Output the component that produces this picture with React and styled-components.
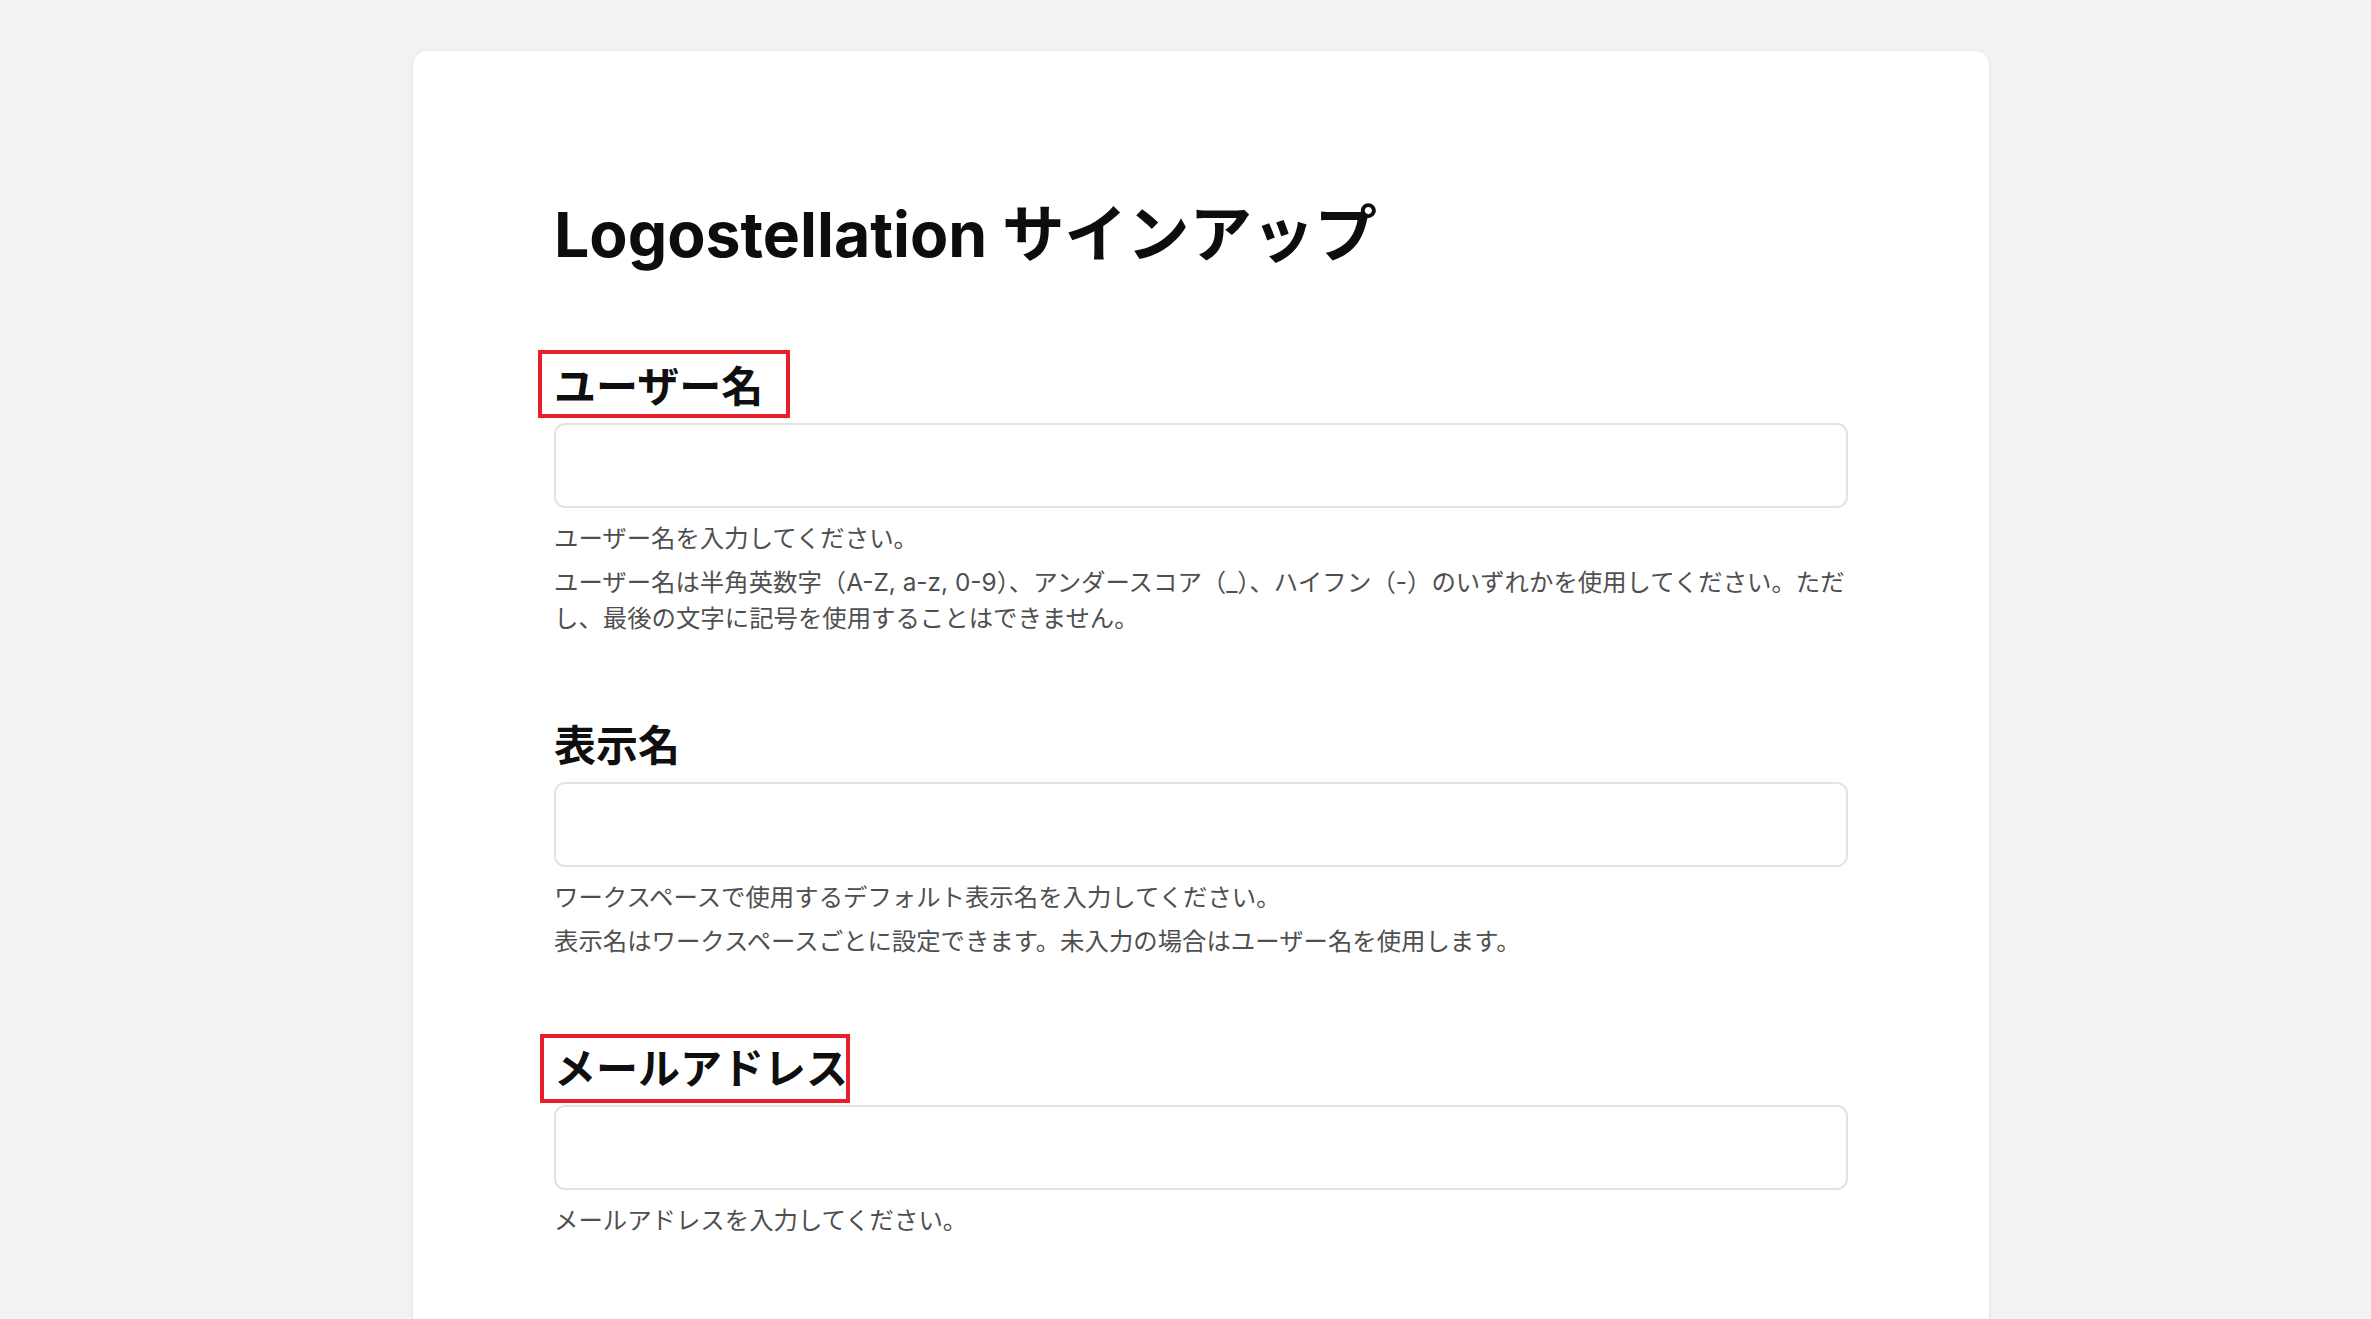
import styled, { createGlobalStyle } from "styled-components";

const GlobalStyle = createGlobalStyle`
    html, body {
        margin: 0;
        padding: 0;
        background-color: #f3f3f3;
    }
    body {
        font-family: Inter, "Noto Sans CJK JP", sans-serif;
        color: #111111;
    }
    * {
        box-sizing: border-box;
    }
`;

const Pagina = styled.div`
    min-height: 100vh;
    padding: 51px 0 0 413px;
`;

const Tarjeta = styled.main`
    width: 1576px;
    padding: 147px 141px 240px;
    background-color: #ffffff;
    border-radius: 14px;
    box-shadow: 0 0 6px rgba(0, 0, 0, 0.07), 0 1px 2px rgba(0, 0, 0, 0.05);
`;

const Titulo = styled.h1`
    margin: 0 0 85px;
    font-size: 62.5px;
    line-height: 72px;
    font-weight: 700;
    color: #0d0d0d;
`;

const Campo = styled.div`
    display: flex;
    flex-direction: column;
    align-items: flex-start;
    & + & {
        margin-top: 78px;
    }
`;

const Etiqueta = styled.label`
    position: relative;
    display: inline-block;
    margin-bottom: 5px;
    font-size: 42px;
    line-height: 63px;
    font-weight: 700;
    color: #0f0f0f;

    &::after {
        content: "";
        display: ${props => (props.$marco ? "block" : "none")};
        position: absolute;
        top: ${props => props.$marco?.top ?? 0}px;
        left: ${props => props.$marco?.left ?? 0}px;
        right: ${props => props.$marco?.right ?? 0}px;
        bottom: ${props => props.$marco?.bottom ?? 0}px;
        border: 4px solid #e61f2b;
        pointer-events: none;
    }
`;

const Entrada = styled.input`
    width: 100%;
    height: 85px;
    padding: 0 20px;
    border: 2px solid #e3e3e3;
    border-radius: 11px;
    background-color: #ffffff;
    font-family: inherit;
    font-size: 24px;
    outline: none;
`;

const Ayuda = styled.div`
    margin-top: 12px;
    display: flex;
    flex-direction: column;
    gap: 8px;
`;

const TextoAyuda = styled.p`
    margin: 0;
    font-size: 24.4px;
    line-height: 36px;
    color: #4f4f4f;
`;

const campos = [
    {
        id: "username",
        etiqueta: "ユーザー名",
        marco: { top: -5, left: -16, right: -27, bottom: 0 },
        ayudas: [
            "ユーザー名を入力してください。",
            "ユーザー名は半角英数字（A-Z, a-z, 0-9）、アンダースコア（_）、ハイフン（-）のいずれかを使用してください。ただし、最後の文字に記号を使用することはできません。",
        ],
    },
    {
        id: "displayName",
        etiqueta: "表示名",
        ayudas: [
            "ワークスペースで使用するデフォルト表示名を入力してください。",
            "表示名はワークスペースごとに設定できます。未入力の場合はユーザー名を使用します。",
        ],
    },
    {
        id: "email",
        etiqueta: "メールアドレス",
        marco: { top: -3, left: -14, right: -2, bottom: -3 },
        ayudas: ["メールアドレスを入力してください。"],
    },
];

export default function App() {
    return (
        <Pagina>
            <GlobalStyle />
            <Tarjeta>
                <Titulo>Logostellation サインアップ</Titulo>
                {campos.map((campo) => (
                    <Campo key={campo.id}>
                        <Etiqueta htmlFor={campo.id} $marco={campo.marco}>
                            {campo.etiqueta}
                        </Etiqueta>
                        <Entrada id={campo.id} type={campo.id === "email" ? "email" : "text"} />
                        <Ayuda>
                            {campo.ayudas.map((texto, i) => (
                                <TextoAyuda key={i}>{texto}</TextoAyuda>
                            ))}
                        </Ayuda>
                    </Campo>
                ))}
            </Tarjeta>
        </Pagina>
    );
}
